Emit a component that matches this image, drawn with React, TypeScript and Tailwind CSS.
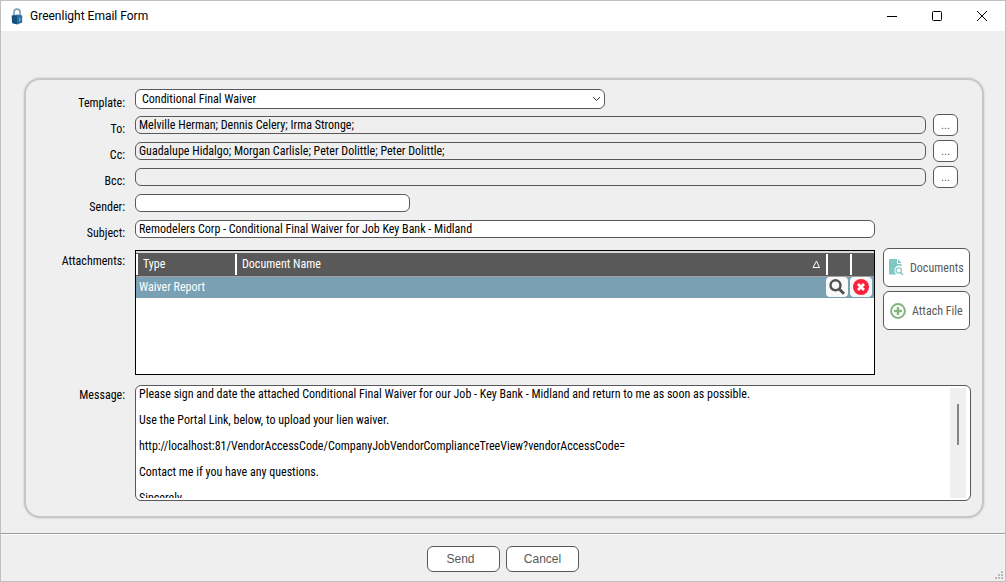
import type { ReactNode } from "react";

const FIELD = "rounded-md border border-[#595959] px-[3px] leading-4 text-black outline-none";
const PUSH = "rounded-md border border-[#595959] bg-white text-[#595959]";

const MESSAGE = `Please sign and date the attached Conditional Final Waiver for our Job - Key Bank - Midland and return to me as soon as possible.

Use the Portal Link, below, to upload your lien waiver.

http://localhost:81/VendorAccessCode/CompanyJobVendorComplianceTreeView?vendorAccessCode=

Contact me if you have any questions.

Sincerely,`;

function LockIcon() {
  return (
    <svg width="12" height="17" viewBox="0 0 12 17" aria-hidden="true">
      <path d="M3 8V4.200a3 3 0 0 1 6 0V8" fill="none" stroke="#7fa3ba" strokeWidth="1.800" />
      <path d="M.8 7.400 6 6.600l5.200.8v7L6.400 16.400 1 15z" fill="#2a6f9f" />
      <path d="M.8 7.400 6 8.200v8.100L1 15z" fill="#17507c" />
      <path d="M8.200 9.800h1.200v3.400H8.200z" fill="#7fb0d0" />
    </svg>
  );
}

function DocumentIcon() {
  return (
    <svg width="15" height="17" viewBox="0 0 15 17" className="shrink-0" aria-hidden="true">
      <path
        d="M1 0h7v5h4.500v2.500A4.200 4.200 0 0 0 5.600 11a4.300 4.300 0 0 0 2.200 4.500H1a1 1 0 0 1-1-1V1a1 1 0 0 1 1-1zM9 0l3.500 4H9z"
        fill="#81c7c3"
      />
      <circle cx="9.800" cy="11.500" r="2.700" fill="none" stroke="#81c7c3" strokeWidth="1.200" />
      <path d="m11.700 13.400 2.300 2.500" stroke="#81c7c3" strokeWidth="1.500" />
    </svg>
  );
}

function PlusCircleIcon() {
  return (
    <svg width="16" height="16" viewBox="0 0 16 16" fill="none" stroke="#82b47f" className="shrink-0" aria-hidden="true">
      <circle cx="8" cy="8" r="6.900" strokeWidth="2" />
      <path d="M8 4v8M4 8h8" strokeWidth="2.400" />
    </svg>
  );
}

function SearchIcon() {
  return (
    <svg width="16" height="16" viewBox="0 0 16 16" fill="none" stroke="#4f5254" aria-hidden="true">
      <circle cx="6.500" cy="6.300" r="5" strokeWidth="2.400" />
      <path d="m10.200 10 4.800 4.800" strokeWidth="3" />
    </svg>
  );
}

function RemoveIcon() {
  return (
    <svg width="16" height="16" viewBox="0 0 16 16" aria-hidden="true">
      <circle cx="8" cy="8" r="8" fill="#f9213c" />
      <path d="m5 5 6 6m0-6-6 6" stroke="#fff" strokeWidth="2.800" />
    </svg>
  );
}

function Row({ id, label, children }: { id: string; label: string; children: ReactNode }) {
  return (
    <div className="flex h-[26px] items-center gap-[10px]">
      <label htmlFor={id} className="w-[99px] shrink-0 pt-2 text-right leading-4">
        {label}
      </label>
      {children}
    </div>
  );
}

function Recipients({ id, label, value }: { id: string; label: string; value: string }) {
  return (
    <Row id={id} label={label}>
      <div className="flex min-w-0 flex-1 items-center gap-[7px] pr-3">
        <input id={id} readOnly defaultValue={value} className={`${FIELD} h-[18px] min-w-0 flex-1 bg-[#efefef]`} />
        <button
          type="button"
          aria-label={`Choose ${label}`}
          className={`${PUSH} h-[22px] w-[25px] font-['Liberation_Sans',sans-serif] text-[11px] leading-4`}
        >
          ...
        </button>
      </div>
    </Row>
  );
}

function HeadCell({ children }: { children?: ReactNode }) {
  return (
    <th className="p-0 font-normal">
      <div className="flex h-[21px] items-center justify-between border-l-2 border-white pl-[5px]">{children}</div>
    </th>
  );
}

export default function App() {
  return (
    <div className="flex min-h-screen flex-col border border-[#c0c0c0] bg-[#efefef] font-['Roboto_Condensed',Roboto,sans-serif] text-[12px] text-black">
      <header className="flex h-[30px] shrink-0 items-center bg-white pr-[17px] pl-[10px] font-['Roboto',sans-serif]">
        <LockIcon />
        <h1 className="flex-1 pl-[7px]">Greenlight Email Form</h1>
        <div className="flex items-center gap-[33px]">
          <button type="button" aria-label="Minimize">
            <svg width="12" height="12" viewBox="0 0 12 12" className="block">
              <path d="M1 6.500h10" stroke="#000" />
            </svg>
          </button>
          <button type="button" aria-label="Maximize">
            <svg width="12" height="12" viewBox="0 0 12 12" className="block">
              <rect x="1.500" y="1.500" width="9" height="9" rx="1" fill="none" stroke="#000" />
            </svg>
          </button>
          <button type="button" aria-label="Close">
            <svg width="12" height="12" viewBox="0 0 12 12" className="block">
              <path d="m1 1 10 10m0-10L1 11" stroke="#000" />
            </svg>
          </button>
        </div>
      </header>

      <main className="pt-[47px] pr-[21px] pb-[15px] pl-[23px]">
        <form className="rounded-2xl border-2 border-[#c6c6c6] pt-[6px] pr-3 pb-[15px] shadow-[0_0_2px_#bbb]">
          <Row id="template" label="Template:">
            <div className="relative flex w-[470px]">
              <select
                id="template"
                className="h-5 w-full appearance-none rounded-md border border-[#595959] bg-white px-[6px] leading-4 outline-none"
              >
                <option>Conditional Final Waiver</option>
              </select>
              <svg
                width="9"
                height="6"
                viewBox="0 0 9 6"
                className="pointer-events-none absolute top-[7px] right-1"
                aria-hidden="true"
              >
                <path d="m1 1 3.500 3.500L8 1" fill="none" stroke="#333" />
              </svg>
            </div>
          </Row>
          <Recipients id="to" label="To:" value="Melville Herman; Dennis Celery; Irma Stronge;" />
          <Recipients id="cc" label="Cc:" value="Guadalupe Hidalgo; Morgan Carlisle; Peter Dolittle; Peter Dolittle;" />
          <Recipients id="bcc" label="Bcc:" value="" />
          <Row id="sender" label="Sender:">
            <input id="sender" className={`${FIELD} h-[18px] w-[275px] bg-white`} />
          </Row>
          <Row id="subject" label="Subject:">
            <div className="flex flex-1 pr-[95px]">
              <input
                id="subject"
                defaultValue="Remodelers Corp - Conditional Final Waiver for Job Key Bank - Midland"
                className={`${FIELD} h-[18px] w-full bg-white`}
              />
            </div>
          </Row>

          <div className="mt-2 flex gap-[10px]">
            <span id="attachments" className="w-[99px] shrink-0 pt-[3px] text-right leading-4">
              Attachments:
            </span>
            <div className="flex min-w-0 flex-1 gap-2">
              <div className="h-[125px] min-w-0 flex-1 border border-black bg-white">
                <table aria-labelledby="attachments" className="w-full table-fixed border-collapse text-left text-white">
                  <colgroup>
                    <col className="w-[99px]" />
                    <col />
                    <col className="w-6" />
                    <col className="w-6" />
                  </colgroup>
                  <thead className="border-t-2 border-b border-t-[#d8d8d8] border-b-[#a0a0a0] bg-[#595959]">
                    <tr className="h-6">
                      <HeadCell>Type</HeadCell>
                      <HeadCell>
                        Document Name
                        <svg width="9" height="8" viewBox="0 0 9 8" className="mr-[5px]" aria-hidden="true">
                          <path d="M1 7.500 4.500 1l3 6.500z" fill="none" stroke="#fff" />
                        </svg>
                      </HeadCell>
                      <HeadCell />
                      <HeadCell />
                    </tr>
                  </thead>
                  <tbody>
                    <tr className="h-[22px] bg-[#7aa0b4]">
                      <td className="p-0 pl-[3px]" colSpan={2}>
                        Waiver Report
                      </td>
                      <td className="p-0">
                        <button
                          type="button"
                          aria-label="View Waiver Report"
                          className="flex h-5 w-[22px] items-center justify-center rounded-sm bg-[#f8f8f8]"
                        >
                          <SearchIcon />
                        </button>
                      </td>
                      <td className="p-0">
                        <button
                          type="button"
                          aria-label="Remove Waiver Report"
                          className="flex h-5 w-[22px] items-center justify-center rounded-sm bg-[#f8f8f8]"
                        >
                          <RemoveIcon />
                        </button>
                      </td>
                    </tr>
                  </tbody>
                </table>
              </div>
              <div className="-mt-[2px] flex w-[87px] flex-col gap-1">
                <button type="button" className={`${PUSH} flex h-[39px] items-center gap-[6px] pl-[5px]`}>
                  <DocumentIcon />
                  Documents
                </button>
                <button type="button" className={`${PUSH} flex h-[39px] items-center gap-[6px] pl-[6px]`}>
                  <PlusCircleIcon />
                  Attach File
                </button>
              </div>
            </div>
          </div>

          <div className="mt-[10px] flex gap-[10px]">
            <label htmlFor="message" className="w-[99px] shrink-0 pt-[2px] text-right leading-4">
              Message:
            </label>
            <div className="-mr-px flex h-[116px] min-w-0 flex-1 rounded-md border border-[#595959] bg-white pt-[2px] pr-1 pb-[2px] pl-[3px]">
              <textarea
                id="message"
                defaultValue={MESSAGE}
                className="block h-full min-w-0 flex-1 resize-none overflow-y-auto leading-[13px] outline-none [scrollbar-width:none]"
              />
              <div className="flex w-4 justify-center bg-[#efefef] pt-4" aria-hidden="true">
                <div className="h-[41px] w-[2px] bg-[#868686]" />
              </div>
            </div>
          </div>
        </form>
      </main>

      <footer className="relative flex flex-1 justify-center gap-[6px] border-t border-[#9c9c9c] pt-3 pb-[9px] font-['Liberation_Sans',sans-serif] text-[12px] shadow-[inset_0_1px_0_#fff]">
        <button type="button" className={`${PUSH} h-[26px] w-[73px] pr-[6px]`}>
          Send
        </button>
        <button type="button" className={`${PUSH} h-[26px] w-[73px]`}>
          Cancel
        </button>
        <svg width="8" height="8" viewBox="0 0 8 8" className="absolute right-[2px] bottom-[2px]" aria-hidden="true">
          <path d="M6 0h2v2H6zM3 3h2v2H3zM6 3h2v2H6zM0 6h2v2H0zM3 6h2v2H3zM6 6h2v2H6z" fill="#b8b8b8" />
        </svg>
      </footer>
    </div>
  );
}
